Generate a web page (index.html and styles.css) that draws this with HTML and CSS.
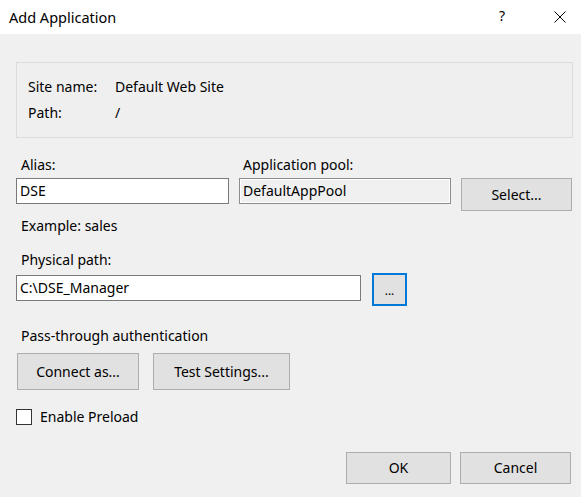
FILE: index.html
```html
<!DOCTYPE html>
<html>
<head>
<meta charset="utf-8">
<link rel="stylesheet" href="styles.css">
</head>
<body>
<div class="dialog">
  <div class="titlebar">
    <span class="title">Add Application</span>
    <span class="help">?</span>
    <svg class="close" width="12" height="12" viewBox="0 0 12 12"><path d="M0.5 0.5 L11.5 11.5 M11.5 0.5 L0.5 11.5" stroke="#000" stroke-width="1" fill="none"/></svg>
  </div>
  <div class="content">
    <div class="group">
      <div class="info-row"><span class="info-label">Site name:</span><span>Default Web Site</span></div>
      <div class="info-row"><span class="info-label">Path:</span><span>/</span></div>
    </div>
    <div class="labels-row">
      <span class="lbl alias-lbl">Alias:</span>
      <span class="lbl pool-lbl">Application pool:</span>
    </div>
    <div class="inputs-row">
      <div class="textbox alias-box">DSE</div>
      <div class="textbox pool-box">DefaultAppPool</div>
      <div class="btn select-btn">Select...</div>
    </div>
    <div class="lbl example">Example: sales</div>
    <div class="lbl phys-lbl">Physical path:</div>
    <div class="phys-row">
      <div class="textbox phys-box">C:\DSE_Manager</div>
      <div class="btn browse-btn">...</div>
    </div>
    <div class="lbl pass-lbl">Pass-through authentication</div>
    <div class="auth-row">
      <div class="btn connect-btn">Connect as...</div>
      <div class="btn test-btn">Test Settings...</div>
    </div>
    <div class="check-row">
      <span class="checkbox"></span>
      <span class="check-lbl">Enable Preload</span>
    </div>
    <div class="footer">
      <div class="btn ok-btn">OK</div>
      <div class="btn cancel-btn">Cancel</div>
    </div>
  </div>
</div>
</body>
</html>
```
FILE: styles.css
```css
html, body {
  margin: 0;
  padding: 0;
  background: #f0f0f0;
}
.dialog {
  width: 581px;
  height: 497px;
  background: #f0f0f0;
  font-family: "Noto Sans", "Open Sans", sans-serif;
  font-size: 14px;
  color: #000;
  line-height: 20px;
  overflow: hidden;
}
.titlebar {
  height: 34px;
  background: #fff;
  display: flex;
  align-items: center;
}
.title {
  margin-left: 9px;
  font-size: 14.5px;
  flex: 1;
}
.help {
  font-size: 14px;
  margin-right: 49px;
  margin-top: -2px;
}
.close {
  margin-right: 15px;
  margin-top: -1px;
}
.content {
  padding-left: 16px;
  padding-right: 8px;
  display: flex;
  flex-direction: column;
}
.group {
  margin-top: 28px;
  width: 555px;
  height: 60px;
  border: 1px solid #dcdcdc;
  background: #efefef;
  padding-top: 14px;
  box-sizing: content-box;
}
.info-row {
  display: flex;
  padding-left: 11px;
  height: 20px;
  margin-bottom: 6px;
}
.info-label {
  width: 87px;
}
.labels-row {
  display: flex;
  margin-top: 17px;
}
.lbl {
  height: 20px;
}
.alias-lbl {
  margin-left: 5px;
  width: 222px;
}
.inputs-row {
  display: flex;
  margin-top: 3px;
  align-items: flex-start;
}
.textbox {
  box-sizing: border-box;
  height: 26px;
  border: 1px solid #7a7a7a;
  background: #fff;
  padding-left: 3px;
  line-height: 23px;
}
.alias-box {
  width: 213px;
}
.pool-box {
  width: 212px;
  margin-left: 10px;
  background: #f0f0f0;
  border-color: #8c8c8c;
  box-shadow: inset 0 0 0 1px #fff;
}
.btn {
  box-sizing: border-box;
  background: #e1e1e1;
  border: 1px solid #adadad;
  display: flex;
  align-items: center;
  justify-content: center;
}
.select-btn {
  width: 111px;
  height: 33px;
  margin-left: 10px;
}
.example {
  margin-top: 5px;
  margin-left: 5px;
}
.phys-lbl {
  margin-top: 14px;
  margin-left: 5px;
}
.phys-row {
  display: flex;
  margin-top: 3px;
  align-items: flex-start;
}
.phys-box {
  width: 345px;
  margin-top: 2px;
}
.browse-btn {
  width: 35px;
  height: 33px;
  margin-left: 11px;
  border: 2px solid #0078d7;
  font-size: 12px;
  padding-top: 2px;
}
.pass-lbl {
  margin-top: 20px;
  margin-left: 5px;
}
.auth-row {
  display: flex;
  margin-top: 7px;
  gap: 14px;
  margin-left: 1px;
}
.connect-btn {
  width: 122px;
  height: 37px;
}
.test-btn {
  width: 137px;
  height: 37px;
}
.check-row {
  display: flex;
  align-items: center;
  margin-top: 17px;
}
.checkbox {
  box-sizing: border-box;
  width: 16px;
  height: 16px;
  border: 1px solid #333;
  background: #fff;
}
.check-lbl {
  margin-left: 8px;
}
.footer {
  display: flex;
  justify-content: flex-end;
  gap: 9px;
  margin-top: 25px;
  padding-right: 2px;
}
.ok-btn {
  width: 105px;
  height: 32px;
}
.cancel-btn {
  width: 111px;
  height: 32px;
}
```
